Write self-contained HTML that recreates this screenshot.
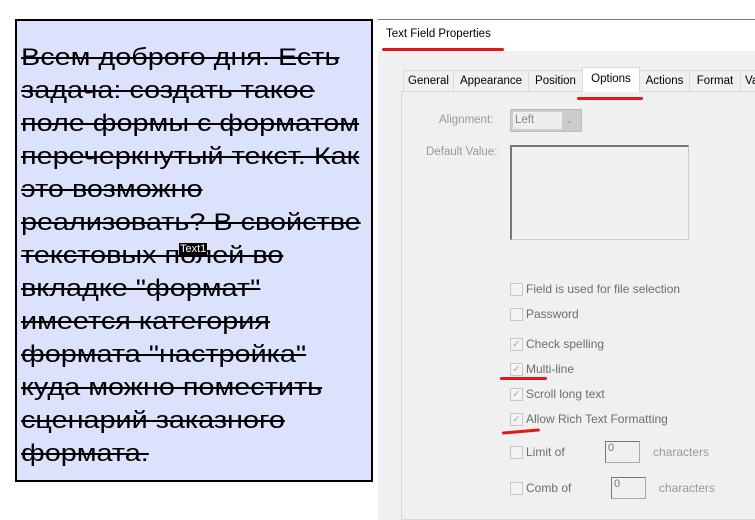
<!DOCTYPE html>
<html><head><meta charset="utf-8"><style>
*{margin:0;padding:0;box-sizing:border-box}
body{width:755px;height:520px;background:#fff;position:relative;overflow:hidden;font-family:"Liberation Sans",sans-serif}
.box{position:absolute;left:15px;top:19px;width:358px;height:463px;border:2px solid #000;background:#dce2fc}
.ln{position:absolute;left:4px;font-size:24px;line-height:33px;white-space:nowrap;text-decoration:line-through;color:#000;transform:scaleX(1.2);transform-origin:0 0}
.tag{position:absolute;left:179px;top:243px;background:#000;color:#fff;font-size:11px;line-height:13px;padding:0 1px}
.r{position:absolute;left:378px;top:19px;width:377px;height:501px;background:#f0f0f0;border-top:1px solid #777}
.hd{position:absolute;left:0;top:0;width:377px;height:31px;background:#fff}
.t{position:absolute;font-size:11px;white-space:nowrap}
.tab{position:absolute;top:50px;height:22px;border:1px solid #d9d9d9;border-bottom:none;background:#f0f0f0;font-size:11.5px;line-height:20px;text-align:center;color:#000}
.pan{position:absolute;left:23px;top:71px;width:360px;height:429px;border:1px solid #d9d9d9;background:#f0f0f0}
.cb{position:absolute;left:132px;width:13px;height:13px;border:1px solid #c8c8c8;background:#f3f3f3}
.lb{position:absolute;left:148px;font-size:12px;color:#6d6d6d;white-space:nowrap}
.red{position:absolute;height:3px;background:#e01818;border-radius:2px}
.inp{position:absolute;border:1px solid #aaa;border-top-color:#777;border-left-color:#777;background:#f0f0f0;font-size:11px;color:#777;padding-left:2px}
</style></head><body>
<div class="box">
<div class="ln" style="top:20px">Всем доброго дня. Есть</div>
<div class="ln" style="top:53px">задача: создать такое</div>
<div class="ln" style="top:86px">поле формы с форматом</div>
<div class="ln" style="top:119px">перечеркнутый текст. Как</div>
<div class="ln" style="top:152px">это возможно</div>
<div class="ln" style="top:185px">реализовать? В свойстве</div>
<div class="ln" style="top:218px">текстовых полей во</div>
<div class="ln" style="top:251px">вкладке "формат"</div>
<div class="ln" style="top:284px">имеется категория</div>
<div class="ln" style="top:317px">формата "настройка"</div>
<div class="ln" style="top:350px">куда можно поместить</div>
<div class="ln" style="top:383px">сценарий заказного</div>
<div class="ln" style="top:416px">формата.</div>
</div>
<div class="tag">Text1</div>
<div class="r">
<div class="hd"></div>
<div class="t" style="left:8px;top:8px;font-size:11.5px">Text Field Properties</div>
<div class="red" style="left:4px;top:28px;width:122px"></div>
<div class="tab" style="left:25px;width:51px">General</div>
<div class="tab" style="left:75px;width:76px">Appearance</div>
<div class="tab" style="left:150px;width:55px">Position</div>
<div class="tab" style="left:261px;width:51px">Actions</div>
<div class="tab" style="left:311px;width:52px">Format</div>
<div class="tab" style="left:362px;width:30px;text-align:left;padding-left:4px">Va</div>
<div class="pan"></div>
<div class="tab" style="left:204px;top:47px;height:25px;width:58px;background:#fff;line-height:22px">Options</div>
<div class="red" style="left:199px;top:77px;width:66px"></div>
<div class="t" style="left:61px;top:94px;color:#999;font-size:11.5px">Alignment:</div>
<div style="position:absolute;left:132px;top:89px;width:72px;height:23px;border:1px solid #bbb;background:#ccc"><div style="position:absolute;left:2px;top:2px;width:49px;height:17px;background:#eee;font-size:11.5px;color:#888;padding-left:2px;line-height:17px">Left</div><div style="position:absolute;right:8px;top:5px;font-size:9px;color:#999">&#8964;</div></div>
<div class="t" style="left:48px;top:126px;color:#999;font-size:11.5px">Default Value:</div>
<div style="position:absolute;left:132px;top:125px;width:179px;height:95px;border:1px solid #ccc;border-top:2px solid #777;border-left:2px solid #777;background:#f0f0f0"></div>
<div class="cb" style="top:263px"></div><div class="lb" style="top:262px">Field is used for file selection</div>
<div class="cb" style="top:288px"></div><div class="lb" style="top:287px">Password</div>
<div class="cb" style="top:318px;color:#aaa;font-size:10px;line-height:11px;text-align:center">✓</div><div class="lb" style="top:317px">Check spelling</div>
<div class="cb" style="top:343px;color:#aaa;font-size:10px;line-height:11px;text-align:center">✓</div><div class="lb" style="top:342px">Multi-line</div>
<div class="red" style="left:122px;top:357px;width:47px"></div>
<div class="cb" style="top:368px;color:#aaa;font-size:10px;line-height:11px;text-align:center">✓</div><div class="lb" style="top:367px">Scroll long text</div>
<div class="cb" style="top:393px;color:#aaa;font-size:10px;line-height:11px;text-align:center">✓</div><div class="lb" style="top:392px">Allow Rich Text Formatting</div>
<div class="red" style="left:124px;top:410px;width:38px;transform:rotate(-5deg)"></div>
<div class="cb" style="top:426px"></div><div class="lb" style="top:425px">Limit of</div>
<div class="inp" style="left:227px;top:421px;width:35px;height:22px">0</div>
<div class="lb" style="left:275px;top:425px;color:#999">characters</div>
<div class="cb" style="top:462px"></div><div class="lb" style="top:461px">Comb of</div>
<div class="inp" style="left:233px;top:457px;width:35px;height:22px">0</div>
<div class="lb" style="left:281px;top:461px;color:#999">characters</div>
</div>
</body></html>
